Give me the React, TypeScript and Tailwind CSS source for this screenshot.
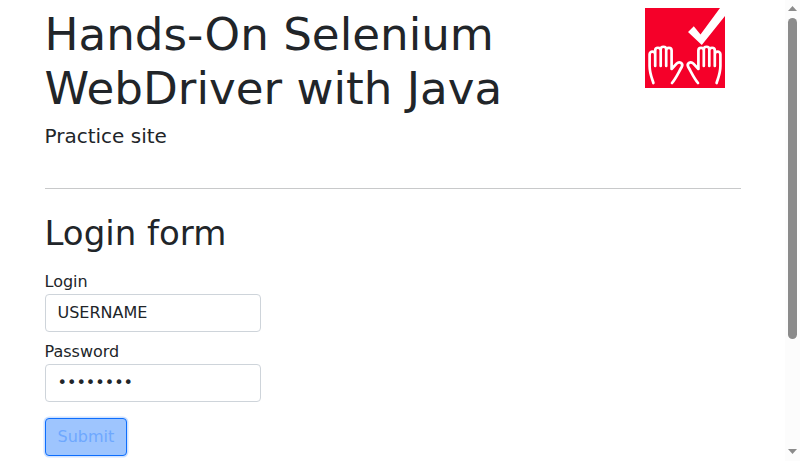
function Hand() {
  return (
    <path
      d="M8.4 75C6.5 69 4.6 65 4.6 58V46.5a2.8 2.8 0 0 1 5.6 0M10.2 58V42.5a2.75 2.75 0 0 1 5.5 0V58M15.7 41.5a2.75 2.75 0 0 1 5.5 0V58M21.2 42.5a2.7 2.7 0 0 1 5.4 0V61L31.6 55.6c2.9-3 7.2 0 5 3.6C34 63.4 31.5 69.5 27 75"
      fill="none"
      stroke="#fff"
      strokeWidth="2.7"
      strokeLinecap="round"
      strokeLinejoin="round"
    />
  );
}

function Logo() {
  return (
    <svg className="block h-20 w-20" viewBox="0 0 80 80" role="img" aria-label="Hands-On">
      <rect width="80" height="80" fill="#f50029" />
      <path d="M43 24L48.8 18.3L55.5 26.5L75 0H80V8L56.8 37Z" fill="#fff" />
      <Hand />
      <g transform="translate(80 0) scale(-1 1)">
        <Hand />
      </g>
    </svg>
  );
}

function Scrollbar() {
  return (
    <div className="flex w-[15px] shrink-0 flex-col items-center bg-[#fcfcfc]">
      <svg className="h-[18px] w-[15px] shrink-0" viewBox="0 0 15 18">
        <path d="M3 11L7.5 6L12 11Z" fill="#8b8b8b" />
      </svg>
      <div className="h-[321px] w-[9px] rounded-full bg-[#8b8b8b]" />
      <div className="flex-1" />
      <svg className="h-[18px] w-[15px] shrink-0" viewBox="0 0 15 18">
        <path d="M3 6L7.5 11L12 6Z" fill="#8b8b8b" />
      </svg>
    </div>
  );
}

const field =
  "block h-[38px] w-[216px] rounded-[4px] border border-[#ced4da] bg-white px-3 py-1.5 text-base leading-6 text-[#212529] outline-none";

export default function App() {
  return (
    <div className="flex h-[461px] overflow-hidden bg-white font-['DejaVu_Sans',sans-serif] text-base leading-6 text-[#212529]">
      <main className="w-[785px] shrink-0 px-[44.5px]">
        <header className="flex items-start justify-between pr-4 pt-[7.5px]">
          <div>
            <h1 className="mb-2 text-[45.2px] leading-[54.24px] font-normal">
              Hands-On Selenium
              <br />
              WebDriver with Java
            </h1>
            <h5 className="text-xl leading-6">Practice site</h5>
          </div>
          <div className="pt-[0.5px]">
            <Logo />
          </div>
        </header>
        <hr className="mt-10 border-[#c8c9ca]" />
        <h1 className="mt-6 mb-4 text-[34px] leading-[40.8px] font-normal">Login form</h1>
        <form>
          <label className="block">
            Login
            <input className={field} type="text" defaultValue="USERNAME" />
          </label>
          <label className="mt-2 block">
            Password
            <input className={field} type="password" defaultValue="password" />
          </label>
          <button
            type="button"
            className="mt-4 block h-[38px] rounded-[4px] border border-[#0d6efd] bg-[#9ec5fe] px-3 py-1.5 leading-6 text-[#6ea8fe] shadow-[0_0_0_1.5px_#cfe2ff]"
          >
            Submit
          </button>
        </form>
      </main>
      <Scrollbar />
    </div>
  );
}
